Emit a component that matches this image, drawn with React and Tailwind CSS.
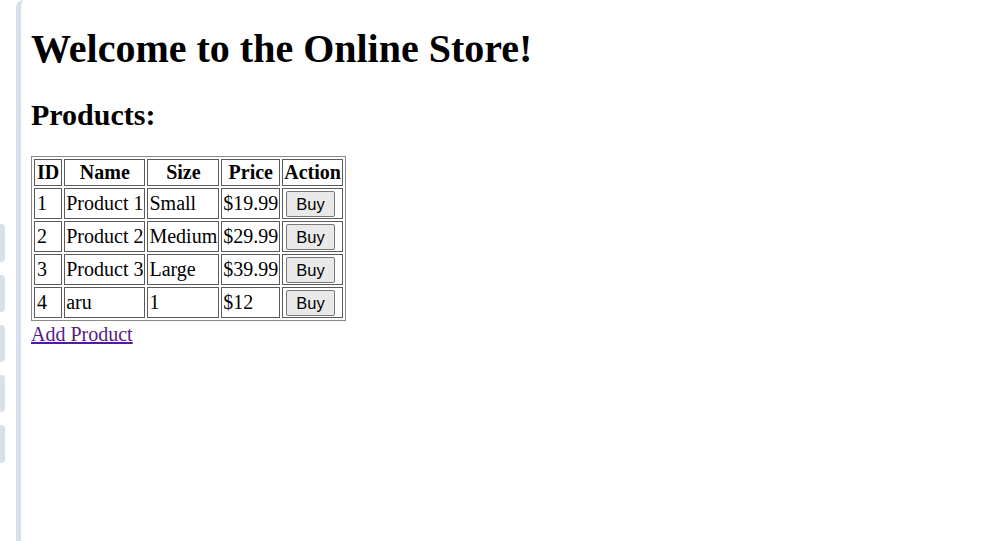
import React from 'react';

const products = [
  { id: 1, name: 'Product 1', size: 'Small', price: '$19.99' },
  { id: 2, name: 'Product 2', size: 'Medium', price: '$29.99' },
  { id: 3, name: 'Product 3', size: 'Large', price: '$39.99' },
  { id: 4, name: 'aru', size: '1', price: '$12' },
];

const cell = 'border border-[#5a5a5a] px-[1px] py-[1px] text-left align-middle';
const head = 'border border-[#5a5a5a] px-[1px] py-[1px] text-center font-bold';

export default function App() {
  return (
    <div className="flex min-h-[541px] w-[1005px] bg-white font-['Liberation_Serif','Times_New_Roman',serif] text-black">
      {/* side tabs */}
      <div className="flex w-[16px] flex-col gap-[13px] pt-[224px]">
        <div className="h-[38px] w-[5px] rounded-r-[4px] bg-[#d8e0ea]" />
        <div className="h-[37px] w-[5px] rounded-r-[4px] bg-[#d8e0ea]" />
        <div className="h-[37px] w-[5px] rounded-r-[4px] bg-[#d8e0ea]" />
        <div className="h-[37px] w-[5px] rounded-r-[4px] bg-[#d8e0ea]" />
        <div className="h-[38px] w-[5px] rounded-r-[4px] bg-[#d8e0ea]" />
      </div>

      {/* page frame */}
      <div className="flex-1 rounded-tl-[8px] border-l-[5px] border-[#d5dee9] px-[10px] pt-[1px]">
        <h1 className="mt-[25px] mb-[25px] text-[40px] font-bold leading-[46px]">
          Welcome to the Online Store!
        </h1>
        <h2 className="mb-[24px] text-[30px] font-bold leading-[35px]">Products:</h2>

        <table className="border-separate border-spacing-[2px] border border-[#8a8a8a] text-[20px] leading-[23px]">
          <thead>
            <tr>
              <th className={head + ' h-[27px] px-[2px]'}>ID</th>
              <th className={head + ' px-[3px]'}>Name</th>
              <th className={head}>Size</th>
              <th className={head}>Price</th>
              <th className={head}>Action</th>
            </tr>
          </thead>
          <tbody>
            {products.map(p => (
              <tr key={p.id}>
                <td className={cell + ' h-[31px] px-[2px]'}>{p.id}</td>
                <td className={cell}>{p.name}</td>
                <td className={cell}>{p.size}</td>
                <td className={cell}>{p.price}</td>
                <td className={cell}>
                  <button className="mx-[2px] h-[26px] rounded-[2px] border border-[#767676] bg-[#e9e9e9] px-[9px] font-['Liberation_Sans',Arial,sans-serif] text-[16.5px] leading-[20px] text-black">
                    Buy
                  </button>
                </td>
              </tr>
            ))}
          </tbody>
        </table>
        <a href="#" className="mt-[2px] inline-block text-[20px] leading-[23px] text-[#551a8b] underline">
          Add Product
        </a>
      </div>
    </div>
  );
}
